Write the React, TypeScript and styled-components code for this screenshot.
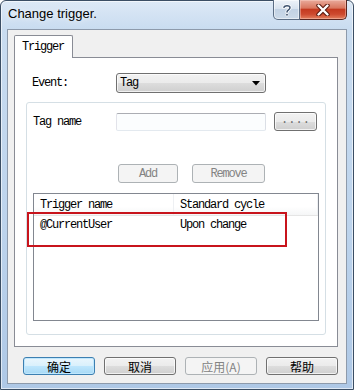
import React from 'react';
import styled, { createGlobalStyle, css } from 'styled-components';

const GlobalStyle = createGlobalStyle`
  * { box-sizing: border-box; }
  html, body { margin: 0; padding: 0; background: #ffffff; }
  body { width: 354px; height: 390px; overflow: hidden; }
`;

const MONO = `'Liberation Mono', 'Noto Sans CJK SC', monospace`;

const monoText = css`
  font-family: ${MONO};
  font-size: 12px;
  letter-spacing: -1.2px;
  color: #000;
`;

const Dialog = styled.div`
  width: 354px;
  height: 390px;
  display: flex;
  flex-direction: column;
  border: 1px solid #3b4e64;
  border-radius: 6px 6px 0 0;
  background: linear-gradient(to bottom, #dde9f6 0px, #c9dcf0 28px, #bcd3ec 60%, #aec8e6 100%);
  box-shadow: inset 0 0 0 1px rgba(255, 255, 255, 0.6);
`;

const TitleBar = styled.div`
  height: 28px;
  display: flex;
  align-items: flex-start;
  flex-shrink: 0;
`;

const Title = styled.div`
  padding: 5px 0 0 7px;
  font-family: 'Liberation Sans', Arial, sans-serif;
  font-size: 13px;
  color: #000;
  text-shadow: 0 0 6px rgba(255, 255, 255, 0.9);
`;

const CaptionButtons = styled.div`
  margin: -1px 6px 0 auto;
  display: flex;
`;

const HelpButton = styled.div`
  width: 27px;
  height: 20px;
  border: 1px solid #5b6d84;
  border-top: none;
  border-radius: 0 0 0 5px;
  background: linear-gradient(to bottom, #eef3f9 0%, #d8e3ef 45%, #c2d2e4 50%, #ccdae9 100%);
  box-shadow: inset 0 0 0 1px rgba(255, 255, 255, 0.5);
  display: flex;
  align-items: center;
  justify-content: center;
`;

const CloseButton = styled.div`
  width: 47px;
  height: 20px;
  border: 1px solid #5a2620;
  border-left: none;
  border-top: none;
  border-radius: 0 0 5px 0;
  background: linear-gradient(to bottom, #e9ab9c 0%, #d9775f 42%, #c43a20 50%, #cd4a2f 75%, #e3805f 100%);
  box-shadow: inset 0 0 0 1px rgba(255, 220, 210, 0.4);
  display: flex;
  align-items: center;
  justify-content: center;
`;

const Client = styled.div`
  flex: 1;
  margin: 0 6px 5px 6px;
  border: 1px solid #8d9aab;
  background: #f0f0f0;
  padding: 5px 8px 8px 6px;
  display: flex;
  flex-direction: column;
`;

const TabStrip = styled.div`
  display: flex;
  height: 22px;
  flex-shrink: 0;
`;

const Tab = styled.div`
  ${monoText};
  width: 59px;
  height: 23px;
  margin-bottom: -1px;
  position: relative;
  z-index: 1;
  border: 1px solid #898c95;
  border-bottom: none;
  border-radius: 2px 2px 0 0;
  background: #ffffff;
  padding: 4px 0 0 7px;
`;

const TabPanel = styled.div`
  flex: 1;
  border: 1px solid #898c95;
  background: #ffffff;
  padding: 15px 11px 11px 11px;
  display: flex;
  flex-direction: column;
`;

const FieldRow = styled.div<{ $indent: number }>`
  display: flex;
  align-items: center;
  padding-left: ${({ $indent }) => $indent}px;
`;

const Label = styled.div<{ $width: number }>`
  ${monoText};
  width: ${({ $width }) => $width}px;
`;

const buttonFace = css`
  border: 1px solid #707070;
  border-radius: 3px;
  background: linear-gradient(to bottom, #f2f2f2 0%, #ebebeb 50%, #dddddd 51%, #cfcfcf 100%);
  box-shadow: inset 0 0 0 1px rgba(255, 255, 255, 0.7);
`;

const Combo = styled.div`
  ${buttonFace};
  ${monoText};
  width: 150px;
  height: 20px;
  display: flex;
  align-items: center;
  justify-content: space-between;
  padding: 0 5px 0 3px;
`;

const GroupBox = styled.div`
  flex: 1;
  margin-top: 9px;
  position: relative;
  border: 1px solid #d5dfe5;
  border-radius: 3px;
  padding: 9px 6px 0 6px;
  display: flex;
  flex-direction: column;
`;

const TextBox = styled.div`
  width: 150px;
  height: 18px;
  border: 1px solid;
  border-color: #abadb3 #dbdfe6 #e3e9ef #e2e3ea;
  border-radius: 2px;
  background: #fbfdfe;
`;

const PushButton = styled.div<{ $width: number; $height?: number; $disabled?: boolean; $default?: boolean }>`
  ${buttonFace};
  ${monoText};
  width: ${({ $width }) => $width}px;
  height: ${({ $height }) => $height ?? 19}px;
  display: flex;
  align-items: center;
  justify-content: center;
  ${({ $disabled }) =>
    $disabled &&
    css`
      border-color: #adb2b5;
      background: #f4f4f4;
      box-shadow: none;
      color: #838383;
    `}
  ${({ $default }) =>
    $default &&
    css`
      border-color: #3c7fb1;
      background: linear-gradient(to bottom, #eaf6fd 0%, #d9f0fc 50%, #bee6fd 51%, #a7d9f5 100%);
      box-shadow: inset 0 0 0 1px #bfe7fd;
    `}
`;

const BrowseButton = styled(PushButton)`
  margin-left: 8px;
  color: #6f6f6f;
  letter-spacing: 0;
  padding-bottom: 4px;
`;

const ActionRow = styled.div`
  display: flex;
  gap: 14px;
  margin-top: 33px;
  padding-left: 85px;
`;

const ListView = styled.div`
  margin-top: 10px;
  width: 286px;
  height: 128px;
  border: 1px solid #828790;
  background: #ffffff;
`;

const ListHeader = styled.div`
  display: flex;
  height: 22px;
  align-items: center;
  background: linear-gradient(to bottom, #ffffff 0%, #ffffff 60%, #f5f6f7 100%);
  border-bottom: 1px solid #e5e5e5;
`;

const ListRow = styled.div`
  display: flex;
  height: 18px;
  align-items: center;
`;

const Cell = styled.div<{ $width?: number }>`
  ${monoText};
  width: ${({ $width }) => ($width ? `${$width}px` : 'auto')};
  flex: ${({ $width }) => ($width ? 'none' : '1')};
  padding-left: 6px;
  white-space: nowrap;
`;

const HeaderCell = styled(Cell)`
  height: 100%;
  display: flex;
  align-items: center;
  border-right: 1px solid #eef0f3;
`;

const Highlight = styled.div`
  position: absolute;
  left: 0;
  top: 109px;
  width: 260px;
  height: 35px;
  border: 2px solid #c8141c;
  pointer-events: none;
`;

const DialogButtons = styled.div`
  margin-top: 10px;
  display: flex;
  justify-content: flex-end;
  gap: 9px;
`;

const CjkButton = styled(PushButton)`
  font-family: 'Noto Sans CJK SC', 'Liberation Sans', sans-serif;
  font-size: 12px;
  letter-spacing: 0;
`;

const DropArrow = () => (
  <svg width="8" height="5" viewBox="0 0 8 5">
    <path d="M0 0 H8 L4 4.5 Z" fill="#000" />
  </svg>
);

const HelpGlyph = () => (
  <svg width="12" height="14" viewBox="0 0 12 14">
    <path
      d="M3 4.5 C3 2.2 9 2.2 9 4.8 C9 6.8 6 6.8 6 9"
      fill="none"
      stroke="#ffffff"
      strokeWidth="3.2"
      strokeLinecap="round"
    />
    <path
      d="M3 4.5 C3 2.2 9 2.2 9 4.8 C9 6.8 6 6.8 6 9"
      fill="none"
      stroke="#3f5470"
      strokeWidth="1.5"
      strokeLinecap="round"
    />
    <circle cx="6" cy="11.8" r="1.4" fill="#3f5470" stroke="#ffffff" strokeWidth="0.8" />
  </svg>
);

const CloseGlyph = () => (
  <svg width="14" height="12" viewBox="0 0 14 12">
    <path d="M2.5 1.5 L11.5 10.5 M11.5 1.5 L2.5 10.5" stroke="#5a1a10" strokeWidth="4.4" strokeLinecap="round" />
    <path d="M2.5 1.5 L11.5 10.5 M11.5 1.5 L2.5 10.5" stroke="#ffffff" strokeWidth="2.4" strokeLinecap="round" />
  </svg>
);

export default function App() {
  return (
    <>
      <GlobalStyle />
      <Dialog>
        <TitleBar>
          <Title>Change trigger.</Title>
          <CaptionButtons>
            <HelpButton>
              <HelpGlyph />
            </HelpButton>
            <CloseButton>
              <CloseGlyph />
            </CloseButton>
          </CaptionButtons>
        </TitleBar>
        <Client>
          <TabStrip>
            <Tab>Trigger</Tab>
          </TabStrip>
          <TabPanel>
            <FieldRow $indent={6}>
              <Label $width={84}>Event:</Label>
              <Combo>
                <span>Tag</span>
                <DropArrow />
              </Combo>
            </FieldRow>
            <GroupBox>
              <FieldRow $indent={0}>
                <Label $width={83}>Tag name</Label>
                <TextBox />
                <BrowseButton $width={43}>....</BrowseButton>
              </FieldRow>
              <ActionRow>
                <PushButton $width={60} $disabled>
                  Add
                </PushButton>
                <PushButton $width={73} $disabled>
                  Remove
                </PushButton>
              </ActionRow>
              <ListView>
                <ListHeader>
                  <HeaderCell $width={140}>Trigger name</HeaderCell>
                  <HeaderCell>Standard cycle</HeaderCell>
                </ListHeader>
                <ListRow>
                  <Cell $width={140}>@CurrentUser</Cell>
                  <Cell>Upon change</Cell>
                </ListRow>
              </ListView>
              <Highlight />
            </GroupBox>
          </TabPanel>
          <DialogButtons>
            <CjkButton $width={72} $height={18} $default>
              确定
            </CjkButton>
            <CjkButton $width={72} $height={18}>
              取消
            </CjkButton>
            <CjkButton $width={72} $height={18} $disabled>
              应用(A)
            </CjkButton>
            <CjkButton $width={72} $height={18}>
              帮助
            </CjkButton>
          </DialogButtons>
        </Client>
      </Dialog>
    </>
  );
}
